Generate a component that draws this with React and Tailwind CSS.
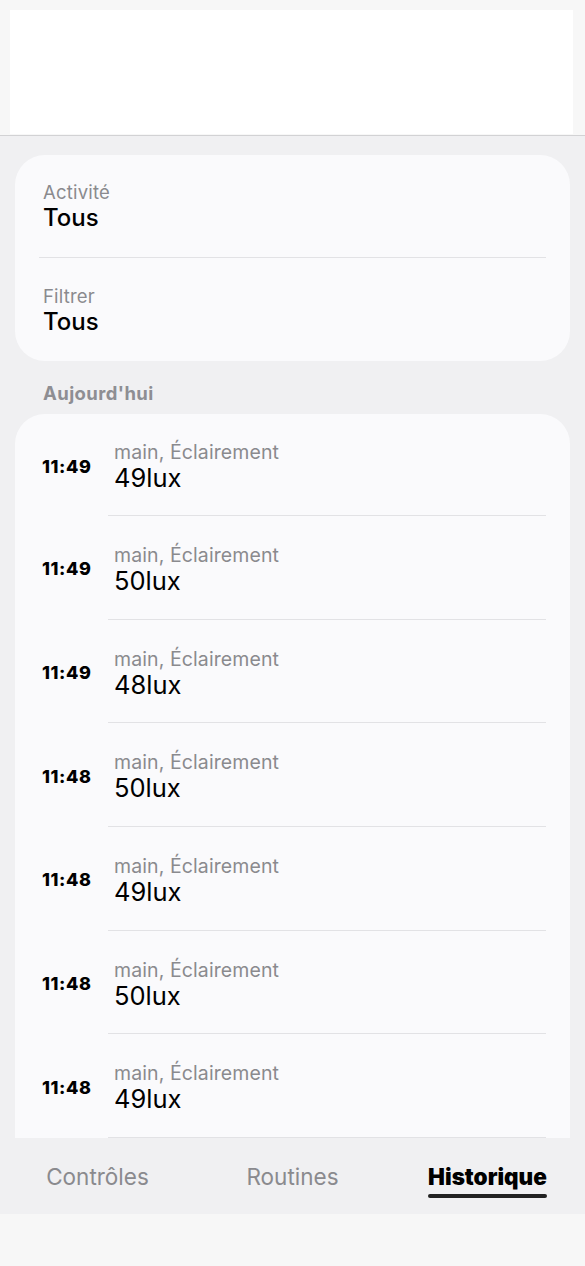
import React from "react";

const rows = [
  ["11:49", "49lux"],
  ["11:49", "50lux"],
  ["11:49", "48lux"],
  ["11:48", "50lux"],
  ["11:48", "49lux"],
  ["11:48", "50lux"],
  ["11:48", "49lux"],
];

export default function App() {
  return (
    <div
      className="w-[585px] h-[1266px] flex flex-col bg-[#f7f7f7] overflow-hidden"
      style={{ fontFamily: "Inter, 'Noto Sans', sans-serif" }}
    >
      <div className="h-[136px] shrink-0 bg-[#f7f7f7] pt-[10px] pl-[10px] pr-[12px] border-b border-[#d2d2d4]">
        <div className="h-[124px] bg-white" />
      </div>

      <div className="h-[1003px] shrink-0 bg-[#f0f0f2] overflow-hidden px-[15px] pt-[19px]">
        <div className="bg-[#fafafc] rounded-[30px]">
          <div className="px-[28px] pt-[26px] pb-[24px]">
            <div className="text-[18.5px] leading-[22px] text-[#8a8a8e] tracking-[0.2px]">Activité</div>
            <div className="text-[24px] leading-[30px] text-black font-medium">Tous</div>
          </div>
          <div className="mx-[24px] h-px bg-[#e2e2e5]" />
          <div className="px-[28px] pt-[27px] pb-[24px]">
            <div className="text-[18.5px] leading-[22px] text-[#8a8a8e] tracking-[0.2px]">Filtrer</div>
            <div className="text-[24px] leading-[30px] text-black font-medium">Tous</div>
          </div>
        </div>

        <div className="pl-[28px] pt-[21px] pb-[10px] text-[18.5px] leading-[22px] font-bold text-[#8e8e93] tracking-[0.4px]">
          Aujourd'hui
        </div>

        <div className="bg-[#fafafc] rounded-t-[30px]">
          {rows.map(([t, v], i) => (
            <div key={i} className="flex">
              <div className="w-[93px] shrink-0 pl-[27px] flex items-center pt-[2px] text-[18px] font-extrabold text-black tracking-[0.6px]">
                {t}
              </div>
              <div
                className={
                  i === 0
                    ? "flex-1 mr-[24px] pl-[6px] pt-[26.5px] pb-[22.5px] border-b border-[#e2e2e5]"
                    : "flex-1 mr-[24px] pl-[6px] pt-[28px] pb-[22.7px] border-b border-[#e2e2e5]"
                }
              >
                <div className="text-[19.5px] leading-[22px] text-[#8a8a8e] tracking-[0.1px]">main, Éclairement</div>
                <div className="text-[25.5px] leading-[30px] text-black">{v}</div>
              </div>
            </div>
          ))}
        </div>
      </div>

      <div className="h-[75px] shrink-0 bg-[#f0f0f2] grid grid-cols-3">
        <div className="flex justify-center pt-[24px]">
          <span className="text-[22.5px] leading-[28px] text-[#8a8a8e] whitespace-nowrap">Contrôles</span>
        </div>
        <div className="flex justify-center pt-[24px]">
          <span className="text-[22.5px] leading-[28px] text-[#8a8a8e] whitespace-nowrap">Routines</span>
        </div>
        <div className="flex justify-center pt-[24px]">
          <div className="flex flex-col items-stretch">
            <span className="text-[22.5px] leading-[28px] font-black text-black whitespace-nowrap">Historique</span>
            <div className="mt-[3px] h-[4px] rounded-full bg-[#222222]" />
          </div>
        </div>
      </div>

      <div className="flex-1 bg-[#f7f7f7]" />
    </div>
  );
}
